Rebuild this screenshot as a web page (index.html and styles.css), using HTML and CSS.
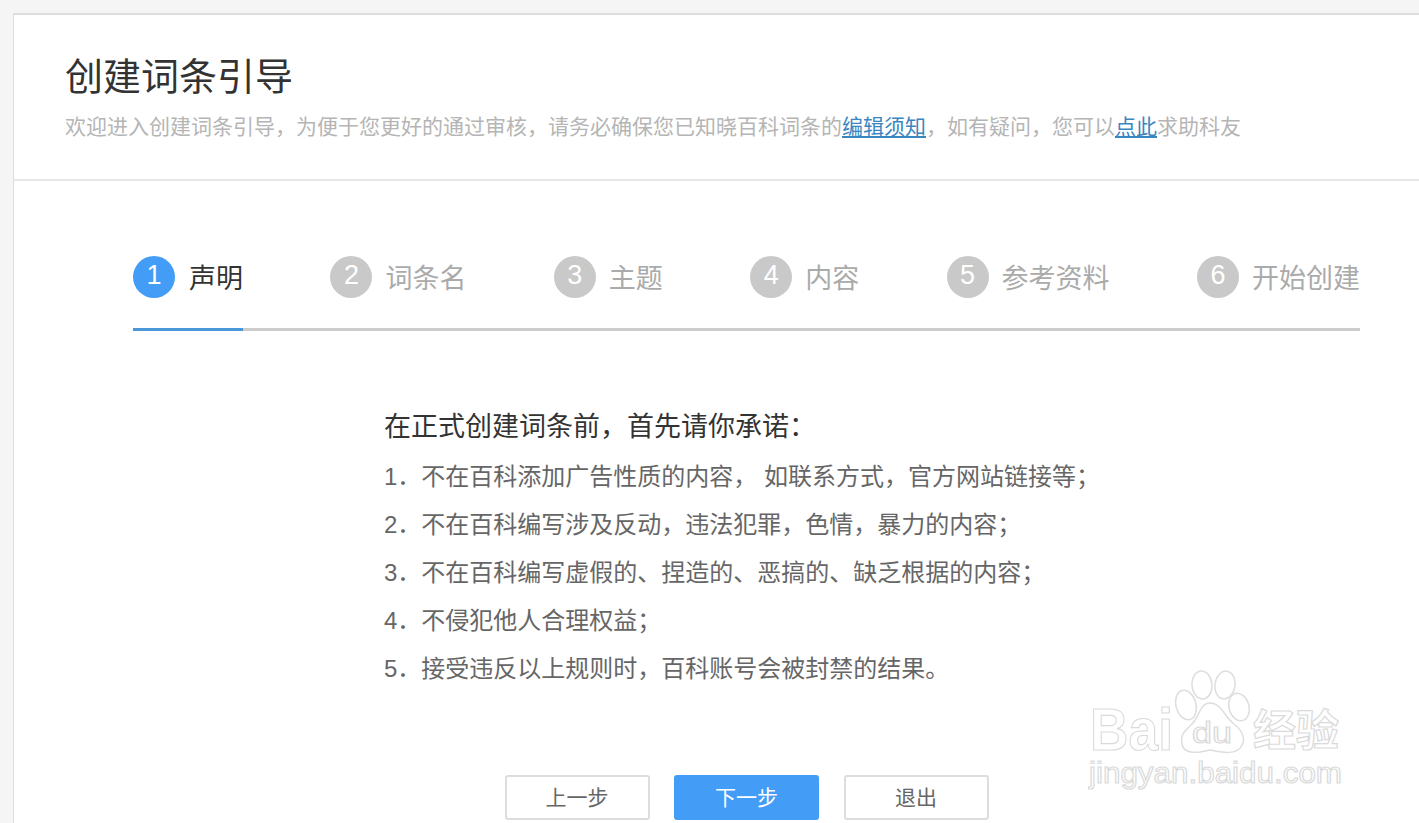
FILE: index.html
```html
<!DOCTYPE html>
<html lang="zh-CN">
<head>
    <meta charset="UTF-8">
    <title>创建词条引导</title>
    <link rel="stylesheet" href="styles.css">
</head>
<body>
    <div class="guide">
        <div class="guide_head">
            <h1 class="guide_title">创建词条引导</h1>
            <p class="guide_desc">欢迎进入创建词条引导，为便于您更好的通过审核，请务必确保您已知晓百科词条的<a href="#">编辑须知</a>，如有疑问，您可以<a href="#">点此</a>求助科友</p>
        </div>
        <div class="guide_body">
            <div class="steps">
                <div class="step active"><span class="step_num">1</span><span class="step_name">声明</span></div>
                <div class="step"><span class="step_num">2</span><span class="step_name">词条名</span></div>
                <div class="step"><span class="step_num">3</span><span class="step_name">主题</span></div>
                <div class="step"><span class="step_num">4</span><span class="step_name">内容</span></div>
                <div class="step"><span class="step_num">5</span><span class="step_name">参考资料</span></div>
                <div class="step"><span class="step_num">6</span><span class="step_name">开始创建</span></div>
            </div>
            <div class="notice">
                <h2 class="notice_title">在正式创建词条前，首先请你承诺：</h2>
                <p class="notice_item">1．不在百科添加广告性质的内容， 如联系方式，官方网站链接等；</p>
                <p class="notice_item">2．不在百科编写涉及反动，违法犯罪，色情，暴力的内容；</p>
                <p class="notice_item">3．不在百科编写虚假的、捏造的、恶搞的、缺乏根据的内容；</p>
                <p class="notice_item">4．不侵犯他人合理权益；</p>
                <p class="notice_item">5．接受违反以上规则时，百科账号会被封禁的结果。</p>
            </div>
            <div class="actions">
                <button class="btn" type="button">上一步</button>
                <button class="btn primary" type="button">下一步</button>
                <button class="btn" type="button">退出</button>
            </div>
        </div>
    </div>
    <svg class="watermark" width="270" height="130" viewBox="0 0 270 130">
        <g class="wm_shape">
            <ellipse cx="98" cy="35" rx="10" ry="15" transform="rotate(-15 98 35)"/>
            <ellipse cx="114" cy="15" rx="10" ry="14" transform="rotate(-5 114 15)"/>
            <ellipse cx="137" cy="15" rx="10" ry="14" transform="rotate(8 137 15)"/>
            <ellipse cx="151" cy="37" rx="10" ry="14" transform="rotate(-15 151 37)"/>
            <path d="M122 33 C133 33 136 46 146 54 C156 62 157 70 154 75 C150 85 136 83 122 80 C110 83 96 85 94 74 C92 64 98 60 104 54 C112 46 112 33 122 33 Z"/>
        </g>
        <text class="wm_text wm_big" x="2" y="80" textLength="83" lengthAdjust="spacingAndGlyphs">Bai</text>
        <text class="wm_text wm_du" x="104" y="73" textLength="40" lengthAdjust="spacingAndGlyphs">du</text>
        <text class="wm_text wm_cn" x="165" y="76" textLength="86" lengthAdjust="spacingAndGlyphs">经验</text>
        <text class="wm_text wm_url" x="1" y="113" textLength="253" lengthAdjust="spacingAndGlyphs">jingyan.baidu.com</text>
    </svg>
</body>
</html>
```
FILE: styles.css
```css
html, body {
    height: 100%;
}
body {
    margin: 0;
    padding: 13px 0 0 13px;
    box-sizing: border-box;
    overflow: hidden;
    position: relative;
    background-color: #f5f5f5;
    font-family: "Liberation Sans", "Noto Sans CJK SC", sans-serif;
}
.guide {
    width: 1406px;
    height: 808px;
    overflow: hidden;
    background-color: #fff;
    border-top: 2px solid #ddd;
    border-left: 1px solid #ddd;
}
.guide_head {
    height: 164px;
    padding: 0 0 0 51px;
    border-bottom: 2px solid #e8e8e8;
    overflow: hidden;
}
.guide_title {
    margin: 34px 0 0;
    font-size: 38px;
    line-height: 56px;
    font-weight: normal;
    color: #333;
}
.guide_desc {
    margin: 7px 0 0;
    font-size: 21px;
    line-height: 30px;
    color: #b5b5b5;
    white-space: nowrap;
}
.guide_desc a {
    color: #3a86c0;
}
.guide_body {
    width: 1227px;
    margin-left: 119px;
}
.steps {
    display: flex;
    justify-content: space-between;
    margin-top: 75px;
    height: 72px;
    border-bottom: 3px solid #ccc;
}
.step {
    display: flex;
    align-items: flex-start;
    gap: 13px;
    height: 75px;
    box-sizing: border-box;
    color: #aaa;
}
.step.active {
    gap: 14px;
    color: #333;
    border-bottom: 3px solid #4a98da;
}
.step_num {
    width: 42px;
    height: 42px;
    border-radius: 50%;
    background-color: #c9c9c9;
    color: #fff;
    font-size: 27px;
    line-height: 38px;
    text-align: center;
}
.active .step_num {
    background-color: #439cf5;
}
.step_name {
    margin-top: 2px;
    font-size: 27px;
    line-height: 42px;
    white-space: nowrap;
}
.notice {
    margin: 72px 0 0 251px;
}
.notice_title {
    margin: 0 0 2px;
    font-size: 27px;
    line-height: 48px;
    font-weight: normal;
    color: #333;
}
.notice_item {
    margin: 0;
    font-size: 24px;
    line-height: 48px;
    color: #666;
    white-space: pre;
}
.actions {
    display: flex;
    gap: 24.5px;
    margin: 82px 0 0 371.5px;
}
.btn {
    width: 145px;
    height: 45px;
    padding: 0 0 3px;
    border: 2px solid #ddd;
    border-radius: 3px;
    background-color: #fff;
    color: #666;
    font-family: inherit;
    font-size: 21px;
}
.btn.primary {
    border-color: #439cf5;
    background-color: #439cf5;
    color: #fff;
}
.watermark {
    position: absolute;
    left: 1088px;
    top: 670px;
}
.wm_shape {
    fill: #fff;
    stroke: #dedede;
    stroke-width: 1.5;
}
.wm_text {
    fill: #fff;
    stroke: #dadada;
    stroke-width: 1.2;
    font-family: "Liberation Sans", "Noto Sans CJK SC", sans-serif;
}
.wm_big {
    font-size: 60px;
    font-weight: bold;
}
.wm_du {
    font-size: 29px;
}
.wm_cn {
    font-size: 43px;
    font-weight: bold;
}
.wm_url {
    font-size: 30px;
}
```
